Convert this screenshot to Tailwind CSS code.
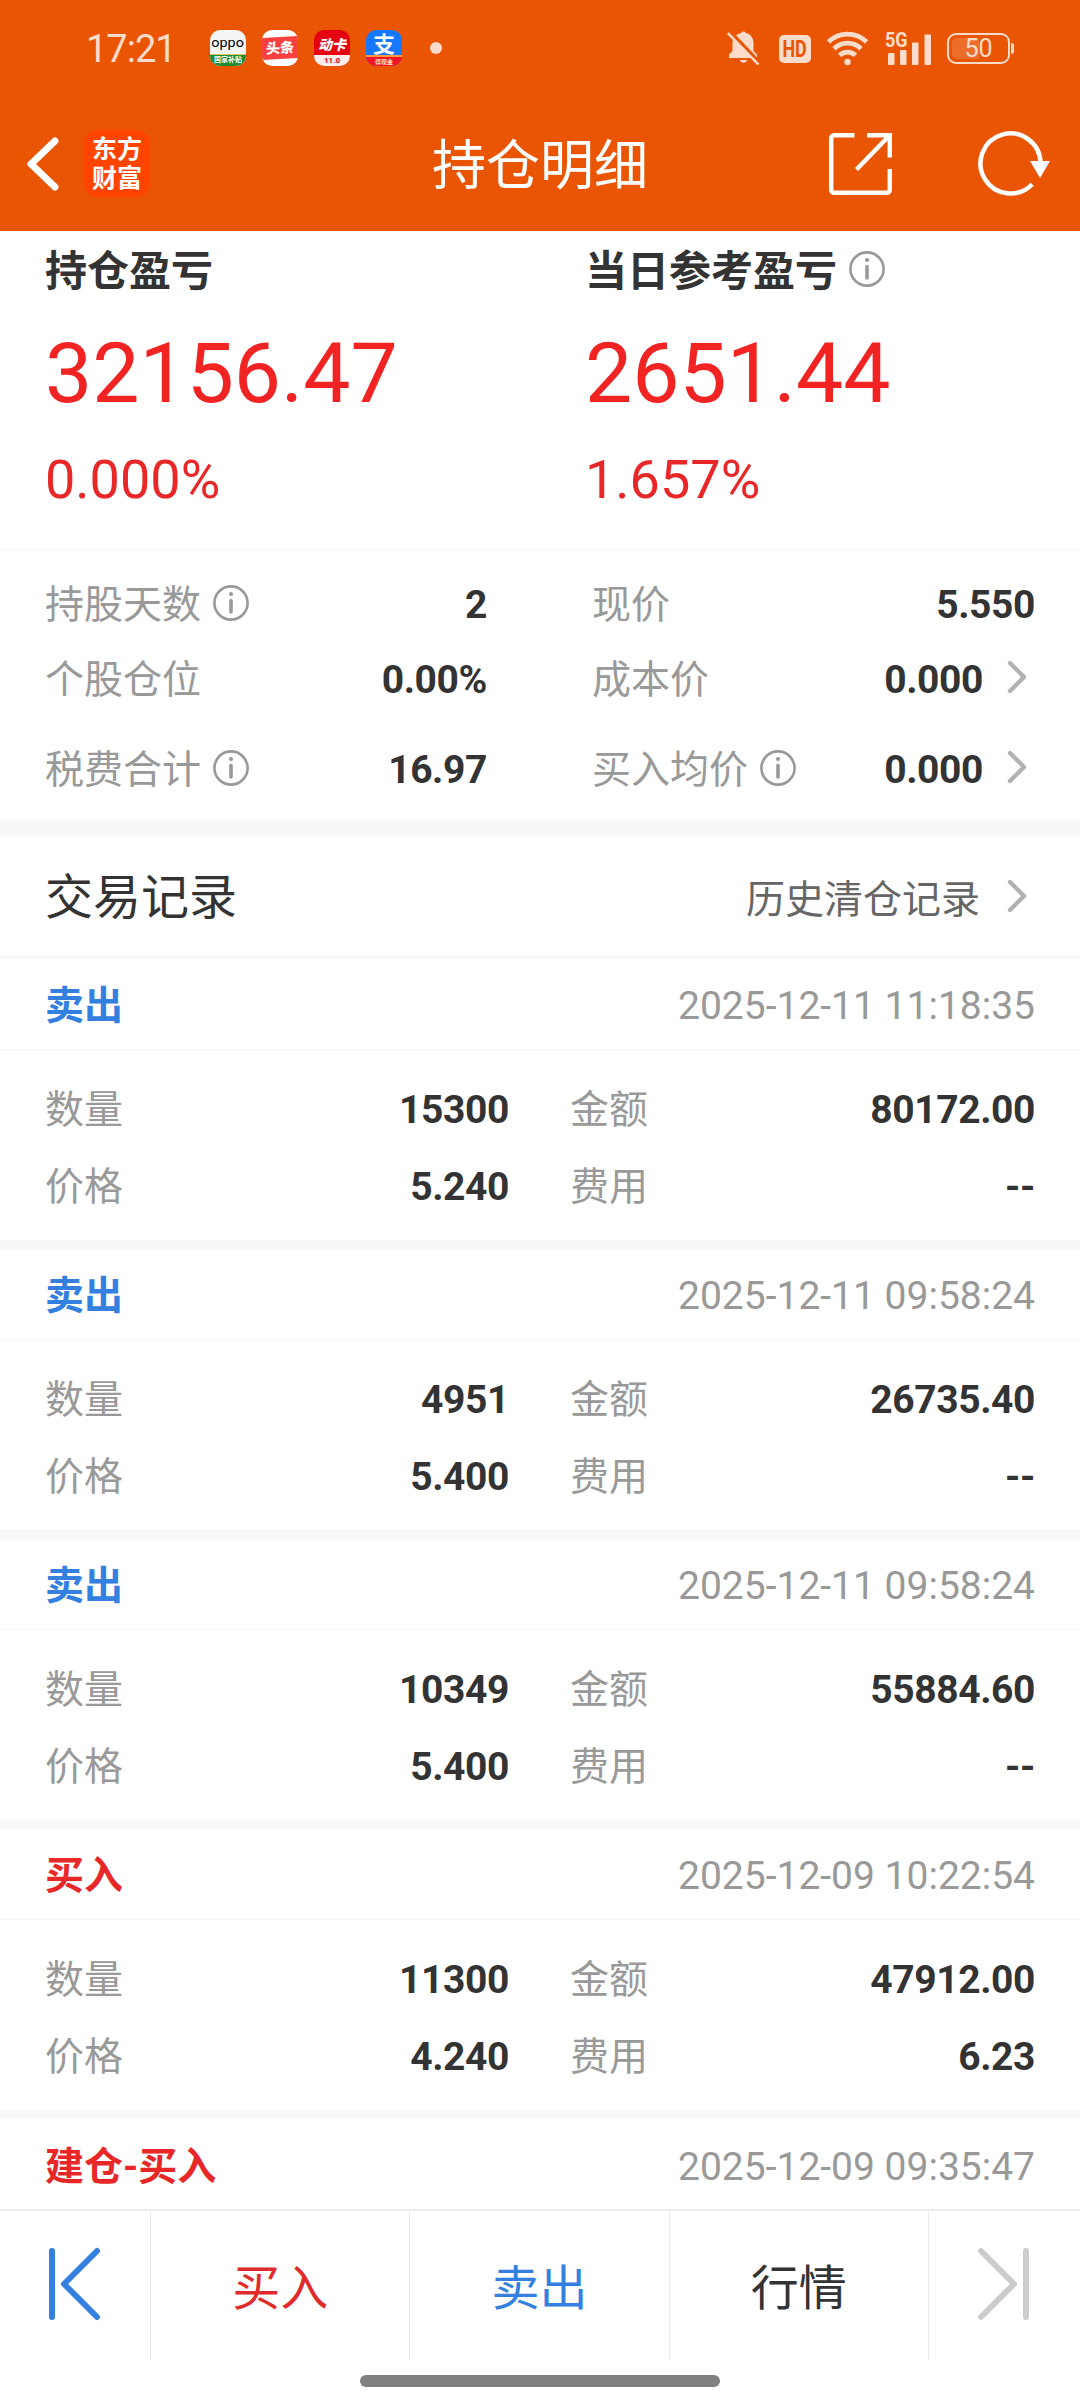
<!DOCTYPE html>
<html lang="zh-CN">

<head>
    <meta charset="UTF-8">
    <title>持仓明细</title>
    <meta name="viewport" content="width=device-width, initial-scale=1.0">
    <script src="https://cdn.jsdelivr.net/npm/@tailwindcss/browser@4"></script>
</head>

<body class="bg-white">
    <!-- Shared icons -->
    <svg class="hidden">
        <symbol id="info" viewBox="0 0 36 36">
            <circle cx="18" cy="18" r="16.6" fill="none" stroke="#999" stroke-width="2.6" />
            <circle cx="18" cy="9" r="2.1" fill="#999" />
            <path d="M18 15.5V27" stroke="#999" stroke-width="3.6" stroke-linecap="round" />
        </symbol>
        <symbol id="chevron" viewBox="0 0 20 34">
            <path d="M3 3L17 17L3 31" fill="none" stroke="#b2b2b2" stroke-width="4.4" stroke-linecap="round" stroke-linejoin="round" />
        </symbol>
    </svg>

    <div class="flex flex-col w-[1080px] h-[2408px] overflow-hidden bg-white text-[39px] leading-none text-[#333] font-[Roboto,'Noto_Sans_CJK_SC',sans-serif]">

        <!-- Header -->
        <header class="h-[231px] shrink-0 bg-[#ea5504] flex flex-col">
            <!-- Status bar -->
            <div class="h-[96px] flex items-center pl-[86px] pr-[66px] text-[#fbdccb]">
                <span class="w-[124px] pt-px text-[38px] tracking-[-1px]">17:21</span>
                <div class="flex items-center gap-4">
                    <!-- OPPO -->
                    <div class="w-9 h-9 rounded-[10px] overflow-hidden bg-[#f5f5f5] flex flex-col">
                        <span class="h-[24px] flex items-center justify-center pt-0.5 text-[12px] text-black"><span class="scale-x-120">oppo</span></span>
                        <span class="flex-1 bg-[#1f8b34] border-t border-[#d9c860] flex items-center justify-center text-[7px] font-bold text-white whitespace-nowrap">国家补贴</span>
                    </div>
                    <!-- Toutiao -->
                    <div class="w-9 h-9 rounded-[10px] overflow-hidden bg-white flex items-center">
                        <span class="w-9 h-[22px] -skew-y-3 bg-[#f9403f] flex items-center justify-center text-[14px] font-black text-white whitespace-nowrap">头条</span>
                    </div>
                    <!-- Dongka -->
                    <div class="w-9 h-9 rounded-[10px] overflow-hidden bg-[#e60012] flex flex-col">
                        <span class="h-[25px] flex items-center justify-center pt-1 text-[14px] font-black italic text-white whitespace-nowrap">动卡</span>
                        <span class="flex-1 bg-[#fdeeee] flex items-center justify-center text-[8px] font-bold text-[#e60012]">11.0</span>
                    </div>
                    <!-- Alipay -->
                    <div class="w-9 h-9 rounded-[10px] overflow-hidden bg-[#1677ff] flex flex-col">
                        <span class="h-[25px] flex items-center justify-center pt-1 text-[22px] font-bold text-white">支</span>
                        <span class="flex-1 bg-[#f5142a] border-t-2 border-[#ff9a3c] flex items-center justify-center text-[6px] font-bold text-[#ffe0c0] whitespace-nowrap">得现金</span>
                    </div>
                </div>
                <span class="ml-[28px] w-3 h-3 rounded-full bg-[#fbdccb]"></span>

                <div class="ml-auto flex items-center">
                    <svg class="w-[33px] h-[34px]" viewBox="0 0 33 34" fill="#fbdccb">
                        <path d="M16.5 .5c1.2 0 2 .6 2.200 1.500 5 1.200 7.800 5 7.800 10v8l3.500 3.500v3.500H2v-3.500L5.500 20V12c0-5 3.800-8.800 8.800-10 .2-.9 1-1.500 2.200-1.500z" />
                        <path d="M13 29h7c-.4 1.800-1.700 2.800-3.500 2.800S13.400 30.800 13 29z" />
                        <path d="M3 .5L34 33" stroke="#ea5504" stroke-width="3.500" />
                        <path d="M.8 2L31.500 33.500" stroke="#fbdccb" stroke-width="2.500" />
                    </svg>
                    <span class="ml-[19px] mt-0.5 w-8 h-7 rounded-[5px] bg-[#fbdccb] text-[#ea5504] text-[23px] font-bold flex items-center justify-center"><span class="scale-x-[.78]">HD</span></span>
                    <svg class="ml-[16px] w-[41px] h-[35px]" viewBox="0 0 41 35" fill="none" stroke="#fbdccb" stroke-width="4.800">
                        <path d="M1.500 11a27 27 0 0 1 38 0" />
                        <path d="M7 17.800a19 19 0 0 1 27 0" />
                        <path d="M12.500 24.400a11.500 11.500 0 0 1 16 0" />
                        <circle cx="20.500" cy="31" r="3.200" fill="#fbdccb" stroke="none" />
                    </svg>
                    <div class="ml-[17px] relative w-[46px] h-[33px]">
                        <span class="absolute left-0 -top-0.5 text-[20px] font-bold leading-[20px] origin-left scale-x-90">5G</span>
                        <svg class="w-[46px] h-[33px]" viewBox="0 0 46 33" fill="#fbdccb">
                            <rect x="3" y="21" width="6.500" height="12" rx="1" />
                            <rect x="15" y="18" width="6.500" height="15" rx="1" />
                            <rect x="27" y="10.500" width="6.500" height="22.500" rx="1" />
                            <rect x="39.500" y="2.500" width="6.500" height="30.500" rx="1" />
                        </svg>
                    </div>
                    <div class="ml-[16px] w-[63px] h-[31px] rounded-[9px] border-2 border-[#fbdccb] p-[3px] relative">
                        <span class="block w-[27px] h-full rounded-l-[5px] bg-white/15"></span>
                        <span class="absolute inset-0 flex items-center justify-center text-[25px]">50</span>
                    </div>
                    <span class="ml-px w-[3px] h-[11px] rounded-r-sm bg-[#fbdccb]"></span>
                </div>
            </div>

            <!-- Title bar -->
            <div class="h-[135px] grid grid-cols-3 items-center text-white">
                <div class="flex items-center pl-[24px]">
                    <svg class="w-[36px] h-[60px]" viewBox="0 0 36 60">
                        <path d="M31 7L7 30L31 53" fill="none" stroke="#fff" stroke-width="7" stroke-linecap="round" stroke-linejoin="round" />
                    </svg>
                    <div class="ml-[24px] w-[66px] h-[67px] rounded-[14px] bg-[#ff4400] flex flex-col items-center justify-center gap-[4px] text-[25px] font-bold">
                        <span class="leading-[25px]">东方</span>
                        <span class="leading-[25px]">财富</span>
                    </div>
                </div>
                <h1 class="pt-[7px] text-center text-[54px] whitespace-nowrap">持仓明细</h1>
                <div class="flex items-center justify-end pr-[30px]">
                    <svg class="w-[64px] h-[64px]" viewBox="0 0 64 64" fill="none" stroke="#fff" stroke-width="4.500">
                        <path d="M26.500 3.200H6.200a3 3 0 0 0-3 3V57.800a3 3 0 0 0 3 3H58.800a3 3 0 0 0 3-3V37" />
                        <path d="M39 3.200H61.800V25.500" />
                        <path d="M61 4L28.500 37.500" />
                    </svg>
                    <svg class="ml-[86px] w-[72px] h-[66px]" viewBox="0 0 72 66">
                        <path d="M54.200 53.200A30 30 0 1 1 62.500 32" fill="none" stroke="#fff" stroke-width="4.500" />
                        <path d="M52 30H72L62 47z" fill="#fff" />
                    </svg>
                </div>
            </div>
        </header>

        <!-- Profit summary -->
        <section class="h-[319px] shrink-0 flex pl-[45px] border-b border-[#f5f5f5]">
            <div class="w-[540px]">
                <h2 class="h-[82px] flex items-center text-[42px] font-bold">持仓盈亏</h2>
                <p class="h-[121px] flex items-center text-[84px] text-[#f12323]">32156.47</p>
                <p class="h-[92px] flex items-center text-[54px] text-[#e82828]">0.000%</p>
            </div>
            <div>
                <h2 class="h-[82px] flex items-center text-[42px] font-bold">当日参考盈亏<svg class="ml-3 mb-[6px] w-9 h-9"><use href="#info" /></svg></h2>
                <p class="h-[121px] flex items-center text-[84px] text-[#f12323]">2651.44</p>
                <p class="h-[92px] flex items-center text-[54px] text-[#e82828]">1.657%</p>
            </div>
        </section>

        <!-- Position details -->
        <section class="h-[270px] shrink-0 flex pt-[18px] pl-[45px] pr-[45px]">
            <div class="w-[442px]">
                <div class="h-[75px] flex items-center"><span class="text-[#999]">持股天数</span><svg class="ml-3 mb-[6px] w-9 h-9"><use href="#info" /></svg><b class="ml-auto tracking-[-0.4px]">2</b></div>
                <div class="h-[75px] flex items-center"><span class="text-[#999]">个股仓位</span><b class="ml-auto tracking-[-0.4px]">0.00%</b></div>
                <div class="mt-[15px] h-[75px] flex items-center"><span class="text-[#999]">税费合计</span><svg class="ml-3 mb-[6px] w-9 h-9"><use href="#info" /></svg><b class="ml-auto tracking-[-0.4px]">16.97</b></div>
            </div>
            <div class="ml-[105px] flex-1">
                <div class="h-[75px] flex items-center"><span class="text-[#999]">现价</span><b class="ml-auto tracking-[-0.4px]">5.550</b></div>
                <div class="h-[75px] flex items-center"><span class="text-[#999]">成本价</span><b class="ml-auto tracking-[-0.4px]">0.000</b><svg class="ml-6 mr-[8px] mb-[7px] w-5 h-[34px]"><use href="#chevron" /></svg></div>
                <div class="mt-[15px] h-[75px] flex items-center"><span class="text-[#999]">买入均价</span><svg class="ml-3 mb-[6px] w-9 h-9"><use href="#info" /></svg><b class="ml-auto tracking-[-0.4px]">0.000</b><svg class="ml-6 mr-[8px] mb-[7px] w-5 h-[34px]"><use href="#chevron" /></svg></div>
            </div>
        </section>
        <div class="h-[15px] shrink-0 bg-[#f7f8fa]"></div>

        <!-- Trade records -->
        <div class="h-[124px] shrink-0 flex items-center pt-[5px] pl-[45px] pr-[53px] border-b-4 border-[#f6f8f9]">
            <h2 class="text-[48px]">交易记录</h2>
            <span class="ml-auto mt-[6px] text-[#666]">历史清仓记录</span>
            <svg class="ml-[27px] mb-[3px] w-5 h-[34px]"><use href="#chevron" /></svg>
        </div>

        <main class="flex-1 min-h-0 overflow-hidden">
            <article class="h-[290px] border-b-9 border-[#f7f8fa]">
                <div class="h-[91px] flex items-center justify-between px-[45px] pt-[5px] border-b border-[#f7f7f7]">
                    <b class="text-[#3380e0]">卖出</b>
                    <time class="text-[#999]">2025-12-11 11:18:35</time>
                </div>
                <div class="flex pl-[45px] pr-[45px] pt-[22px]">
                    <div class="w-[464px]">
                        <div class="h-[77px] flex items-center justify-between"><span class="text-[#999]">数量</span><b class="tracking-[-0.4px]">15300</b></div>
                        <div class="h-[77px] flex items-center justify-between"><span class="text-[#999]">价格</span><b class="tracking-[-0.4px]">5.240</b></div>
                    </div>
                    <div class="ml-[61px] flex-1">
                        <div class="h-[77px] flex items-center justify-between"><span class="text-[#999]">金额</span><b class="tracking-[-0.4px]">80172.00</b></div>
                        <div class="h-[77px] flex items-center justify-between"><span class="text-[#999]">费用</span><b class="tracking-[-0.4px]">--</b></div>
                    </div>
                </div>
            </article>

            <article class="h-[290px] border-b-9 border-[#f7f8fa]">
                <div class="h-[91px] flex items-center justify-between px-[45px] pt-[5px] border-b border-[#f7f7f7]">
                    <b class="text-[#3380e0]">卖出</b>
                    <time class="text-[#999]">2025-12-11 09:58:24</time>
                </div>
                <div class="flex pl-[45px] pr-[45px] pt-[22px]">
                    <div class="w-[464px]">
                        <div class="h-[77px] flex items-center justify-between"><span class="text-[#999]">数量</span><b class="tracking-[-0.4px]">4951</b></div>
                        <div class="h-[77px] flex items-center justify-between"><span class="text-[#999]">价格</span><b class="tracking-[-0.4px]">5.400</b></div>
                    </div>
                    <div class="ml-[61px] flex-1">
                        <div class="h-[77px] flex items-center justify-between"><span class="text-[#999]">金额</span><b class="tracking-[-0.4px]">26735.40</b></div>
                        <div class="h-[77px] flex items-center justify-between"><span class="text-[#999]">费用</span><b class="tracking-[-0.4px]">--</b></div>
                    </div>
                </div>
            </article>

            <article class="h-[290px] border-b-9 border-[#f7f8fa]">
                <div class="h-[91px] flex items-center justify-between px-[45px] pt-[5px] border-b border-[#f7f7f7]">
                    <b class="text-[#3380e0]">卖出</b>
                    <time class="text-[#999]">2025-12-11 09:58:24</time>
                </div>
                <div class="flex pl-[45px] pr-[45px] pt-[22px]">
                    <div class="w-[464px]">
                        <div class="h-[77px] flex items-center justify-between"><span class="text-[#999]">数量</span><b class="tracking-[-0.4px]">10349</b></div>
                        <div class="h-[77px] flex items-center justify-between"><span class="text-[#999]">价格</span><b class="tracking-[-0.4px]">5.400</b></div>
                    </div>
                    <div class="ml-[61px] flex-1">
                        <div class="h-[77px] flex items-center justify-between"><span class="text-[#999]">金额</span><b class="tracking-[-0.4px]">55884.60</b></div>
                        <div class="h-[77px] flex items-center justify-between"><span class="text-[#999]">费用</span><b class="tracking-[-0.4px]">--</b></div>
                    </div>
                </div>
            </article>

            <article class="h-[290px] border-b-9 border-[#f7f8fa]">
                <div class="h-[91px] flex items-center justify-between px-[45px] pt-[5px] border-b border-[#f7f7f7]">
                    <b class="text-[#e82828]">买入</b>
                    <time class="text-[#999]">2025-12-09 10:22:54</time>
                </div>
                <div class="flex pl-[45px] pr-[45px] pt-[22px]">
                    <div class="w-[464px]">
                        <div class="h-[77px] flex items-center justify-between"><span class="text-[#999]">数量</span><b class="tracking-[-0.4px]">11300</b></div>
                        <div class="h-[77px] flex items-center justify-between"><span class="text-[#999]">价格</span><b class="tracking-[-0.4px]">4.240</b></div>
                    </div>
                    <div class="ml-[61px] flex-1">
                        <div class="h-[77px] flex items-center justify-between"><span class="text-[#999]">金额</span><b class="tracking-[-0.4px]">47912.00</b></div>
                        <div class="h-[77px] flex items-center justify-between"><span class="text-[#999]">费用</span><b class="tracking-[-0.4px]">6.23</b></div>
                    </div>
                </div>
            </article>

            <article>
                <div class="h-[91px] flex items-center justify-between px-[45px] pt-[5px]">
                    <b class="text-[#e82828]">建仓-买入</b>
                    <time class="text-[#999]">2025-12-09 09:35:47</time>
                </div>
            </article>
        </main>

        <!-- Bottom bar -->
        <footer class="h-[199px] shrink-0 border-t-2 border-[#eee] bg-white">
            <nav class="h-[149px] flex text-[48px] divide-x divide-[#ebebeb]">
                <div class="w-[151px] flex items-center justify-center">
                    <svg class="mr-[2px] mb-[4px] w-[54px] h-[76px]" viewBox="0 0 54 76" fill="none" stroke="#3380e0" stroke-width="6" stroke-linecap="round" stroke-linejoin="round">
                        <path d="M5 5V71" />
                        <path d="M50 5L17 38L50 71" />
                    </svg>
                </div>
                <div class="flex-1 flex items-center justify-center pt-[6px] text-[#df2b2b]">买入</div>
                <div class="flex-1 flex items-center justify-center pt-[6px] text-[#3380e0]">卖出</div>
                <div class="flex-1 flex items-center justify-center pt-[6px]">行情</div>
                <div class="w-[151px] flex items-center justify-center">
                    <svg class="mb-[4px] w-[54px] h-[76px]" viewBox="0 0 54 76" fill="none" stroke="#ccc" stroke-width="6" stroke-linecap="round" stroke-linejoin="round">
                        <path d="M49 5V71" />
                        <path d="M4 5L37 38L4 71" />
                    </svg>
                </div>
            </nav>
            <div class="mx-auto mt-[15px] w-[360px] h-3 rounded-full bg-[#808080]"></div>
        </footer>
    </div>
</body>

</html>
